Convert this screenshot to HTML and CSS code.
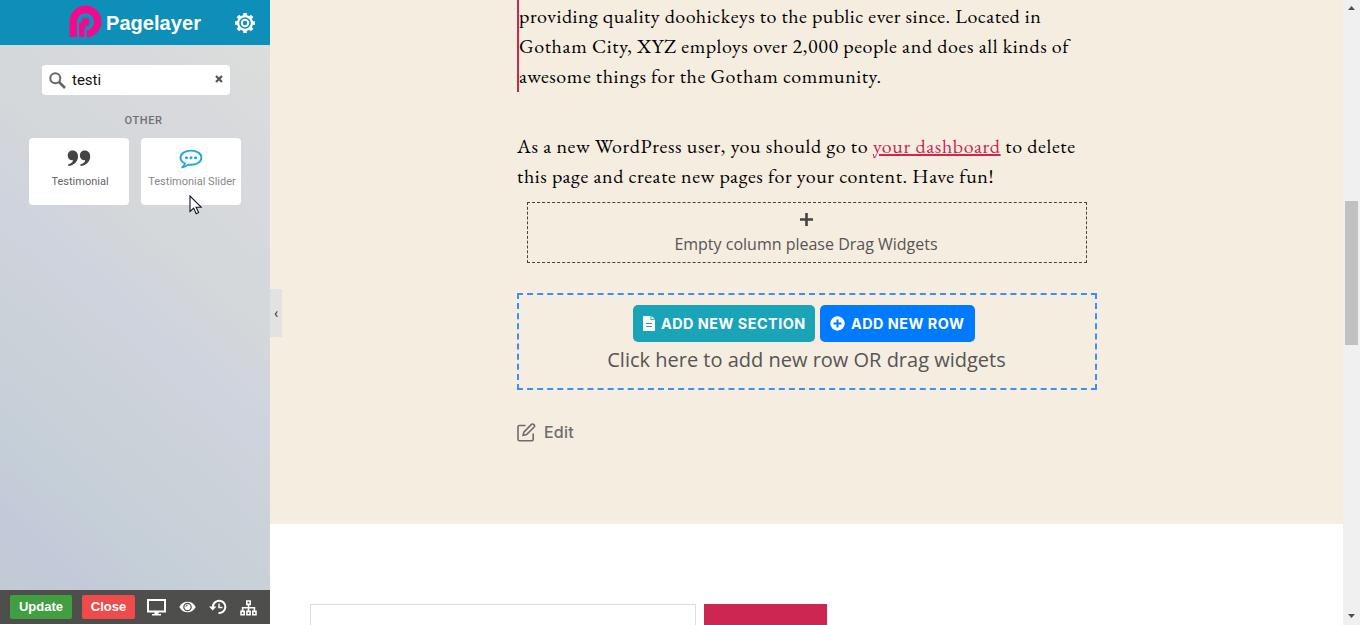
FILE: index.html
```
<!DOCTYPE html>
<html lang="en">
<head>
    <meta charset="UTF-8">
    <meta name="viewport" content="width=device-width, initial-scale=1.0">
    <title>Pagelayer</title>
    <link rel="stylesheet" href="styles.css">
</head>
<body>
    <aside class="sidebar">
        <header class="topbar">
            <svg class="logo" width="33" height="34" viewBox="0 0 33 34">
                <path d="M4.5 32V16.5A12 12 0 1 1 16.5 28.5" fill="none" stroke="#f20a8c" stroke-width="8"/>
                <path d="M13 32V17.500" fill="none" stroke="#f20a8c" stroke-width="7"/>
                <path d="M9 32V17A7.500 7.500 0 1 1 16.500 24.500V33" fill="none" stroke="#1d8dbd" stroke-width="2"/>
                <circle cx="16.500" cy="17" r="4" fill="#f20a8c"/>
            </svg>
            <span class="brand">Pagelayer</span>
            <svg class="gear" width="22" height="22" viewBox="0 0 22 22">
                <g stroke="#fff" stroke-width="3.6">
                    <path d="M11 1v20M1 11h20M3.9 3.9l14.2 14.2M18.1 3.9L3.9 18.1"/>
                </g>
                <circle cx="11" cy="11" r="8" fill="#fff"/>
                <circle cx="11" cy="11" r="5" fill="none" stroke="#0e8fb9" stroke-width="1.600"/>
                <circle cx="11" cy="11" r="2.200" fill="#0e8fb9"/>
            </svg>
        </header>
        <div class="widgets">
            <div class="search">
                <svg width="17" height="17" viewBox="0 0 17 17">
                    <circle cx="6.3" cy="6.3" r="5" fill="none" stroke="#666" stroke-width="2"/>
                    <path d="M10 10l6 6" stroke="#666" stroke-width="2.6"/>
                </svg>
                <span class="query">testi</span>
                <svg class="clear" width="8" height="8" viewBox="0 0 8 8">
                    <path d="M1 1l6 6M7 1L1 7" stroke="#555" stroke-width="2.2"/>
                </svg>
            </div>
            <div class="group">OTHER</div>
            <div class="cards">
                <div class="card">
                    <svg width="24" height="17" viewBox="0 0 24 17">
                        <g fill="#444">
                            <path d="M5.6.5C9 .5 11 3 11 6.500c0 5-4 9-9.500 9.500L1 14.500c3-.8 4.800-2.200 5-4.200-3 .4-5.300-1.700-5.300-4.800C.7 2.500 2.700.5 5.600.5z"/>
                            <path d="M17.800.5C21.200.5 23.200 3 23.200 6.500c0 5-4 9-9.500 9.500l-.5-1.500c3-.8 4.800-2.200 5-4.200-3 .4-5.300-1.700-5.300-4.800 0-3 2-5 4.900-5z"/>
                        </g>
                    </svg>
                    <span>Testimonial</span>
                </div>
                <div class="card hovered">
                    <svg width="24" height="20" viewBox="0 0 24 20">
                        <path d="M6 14.500C3 13 1.500 11 1.500 8.700 1.500 4.600 6 1.600 12 1.600s10.400 3 10.400 7.100S18 15.800 12 15.800c-1 0-1.800 0-2.700-.2C7.500 17.300 5 18.200 2.700 18.500 4.300 17.500 5.500 16 6 14.500z" fill="none" stroke="#1fa9dc" stroke-width="1.900"/>
                        <g fill="#1fa9dc">
                            <circle cx="7.500" cy="8.700" r="1.500"/>
                            <circle cx="12" cy="8.700" r="1.500"/>
                            <circle cx="16.500" cy="8.700" r="1.500"/>
                        </g>
                    </svg>
                    <span>Testimonial Slider</span>
                </div>
            </div>
        </div>
        <footer class="bottombar">
            <button class="btn update">Update</button>
            <button class="btn close">Close</button>
            <svg class="ico-screen" width="19" height="17" viewBox="0 0 19 17">
                <path d="M1 1h17v11.500H1z" fill="none" stroke="#fff" stroke-width="2"/>
                <path d="M7.500 13h4v2H14v1.500H5V15h2.500z" fill="#fff"/>
            </svg>
            <svg class="ico-eye" width="17" height="12" viewBox="0 0 17 12">
                <path d="M.3 6C2 2.600 5 .7 8.500.7S15 2.600 16.700 6C15 9.400 12 11.300 8.500 11.300S2 9.400.3 6z" fill="#fff"/>
                <circle cx="8.500" cy="6" r="3.700" fill="none" stroke="#4e4e4c" stroke-width="1.200"/>
                <path d="M6.800 5.800a1.800 1.800 0 0 1 1.800-1.600" fill="none" stroke="#4e4e4c"/>
            </svg>
            <svg class="ico-history" width="18" height="16" viewBox="0 0 18 16">
                <path d="M4 8.500A6.200 6.200 0 1 1 9.500 14" fill="none" stroke="#fff" stroke-width="2"/>
                <path d="M0 7.500h7.500L3.700 11.500z" fill="#fff"/>
                <path d="M10 4.500V8.500h3.500" fill="none" stroke="#fff" stroke-width="1.500"/>
            </svg>
            <svg class="ico-tree" width="17" height="16" viewBox="0 0 17 16">
                <g fill="none" stroke="#fff" stroke-width="1.600">
                    <path d="M6.800 1h3.400v3.400H6.800zM1 11.400h3.200v3.400H1zM6.900 11.400h3.200v3.400H6.900zM12.800 11.400H16v3.400h-3.200zM8.500 4.400v7M2.600 11V7.800h11.800V11"/>
                </g>
            </svg>
        </footer>
        <!-- mouse pointer over the hovered widget -->
        <svg class="cursor" width="13" height="20" viewBox="0 0 13 20">
            <path d="M1 1v15.500l3.700-3.400 2.500 5.600 2.400-1.100-2.500-5.400h5z" fill="#fff" stroke="#112" stroke-width="1.100"/>
        </svg>
        <div class="collapse">‹</div>
    </aside>

    <main class="page">
        <section class="content">
            <div class="column">
                <blockquote class="quote">
                    <span class="l1">providing quality doohickeys to the public ever since. Located in</span>
                    <span class="l2">Gotham City, XYZ employs over 2,000 people and does all kinds of</span>
                    <span class="l3">awesome things for the Gotham community.</span>
                </blockquote>
                <p class="text">
                    <span class="l4">As a new WordPress user, you should go to <a href="#">your dashboard</a> to delete</span>
                    <span class="l5">this page and create new pages for your content. Have fun!</span>
                </p>
                <div class="empty-col">
                    <svg width="13" height="13" viewBox="0 0 13 13">
                        <path d="M6.500 0v13M0 6.500h13" stroke="#444" stroke-width="2.600"/>
                    </svg>
                    <span>Empty column please Drag Widgets</span>
                </div>
                <div class="add-area">
                    <div class="add-buttons">
                        <button class="add section">
                            <svg width="12" height="15" viewBox="0 0 12 15">
                                <path d="M1 0h6.500v4H12v10a1 1 0 0 1-1 1H1a1 1 0 0 1-1-1V1a1 1 0 0 1 1-1zM8.500 0L12 3.200H8.500z" fill="#fff"/>
                                <path d="M3 7.500h6M3 10.500h6" stroke="#1aa4b8" stroke-width="1"/>
                            </svg>
                            <span>ADD NEW SECTION</span>
                        </button>
                        <button class="add row">
                            <svg width="15" height="15" viewBox="0 0 15 15">
                                <circle cx="7.500" cy="7.500" r="7.200" fill="#fff"/>
                                <path d="M7.500 3.500v8M3.500 7.500h8" stroke="#007bff" stroke-width="2"/>
                            </svg>
                            <span>ADD NEW ROW</span>
                        </button>
                    </div>
                    <div class="hint">Click here to add new row OR drag widgets</div>
                </div>
                <div class="edit">
                    <svg width="19" height="19" viewBox="0 0 19 19">
                        <g fill="none" stroke="#6d6d6d" stroke-width="1.600" stroke-linejoin="round" stroke-linecap="round">
                            <path d="M8 2.500H2.500A1.500 1.500 0 0 0 1 4v12.300a1.500 1.500 0 0 0 1.500 1.500h12.200a1.500 1.500 0 0 0 1.500-1.500V11"/>
                            <path d="M14.200 1.600a1.800 1.800 0 0 1 2.700 2.700L9.500 11.600 6 12.500l.9-3.400z"/>
                        </g>
                    </svg>
                    <span>Edit</span>
                </div>
            </div>
        </section>
        <section class="search-form">
            <div class="field"></div>
            <div class="submit"></div>
        </section>
    </main>

    <div class="scrollbar">
        <svg width="7" height="4" viewBox="0 0 7 4"><path d="M0 4L3.500 0 7 4z" fill="#505050"/></svg>
        <div class="thumb"></div>
        <svg class="down" width="7" height="4" viewBox="0 0 7 4"><path d="M0 0h7L3.500 4z" fill="#505050"/></svg>
    </div>
</body>
</html>
```
FILE: styles.css
```
* {
    box-sizing: border-box;
}
body {
    margin: 0;
    display: flex;
    height: 625px;
    overflow: hidden;
    background: #fff;
    font-family: Roboto, sans-serif;
}
svg {
    display: block;
    flex: none;
}
button {
    border: none;
    padding: 0;
    color: #fff;
}

/* sidebar */
.sidebar {
    position: relative;
    width: 270px;
    height: 624px;
    flex: none;
    display: flex;
    flex-direction: column;
}
.topbar {
    height: 45px;
    background: #0e8fb9;
    display: flex;
    align-items: center;
    padding-left: 69px;
}
.logo {
    margin-top: -1px;
}
.brand {
    width: 95px;
    margin-left: 4px;
    margin-top: 1px;
    font: bold 20px "Liberation Sans", Arial, sans-serif;
    letter-spacing: 0.05px;
    color: #fff;
    white-space: nowrap;
}
.gear {
    margin-left: 33px;
    margin-top: 1px;
}
.widgets {
    flex: 1;
    padding: 20px 29px 0;
    background: linear-gradient(222deg, #dcdedc 0%, #d8d9dc 16%, #d4d8da 36%, #cfd3dd 50%, #cad1d8 66%, #c5cfd8 80%, #c3c9d9 90%, #c1cbd5 100%);
}
.search {
    width: 188px;
    height: 30px;
    margin-left: 13px;
    padding: 0 7px;
    border-radius: 4px;
    background: #fff;
    display: flex;
    align-items: center;
}
.query {
    margin-left: 6px;
    font-size: 15px;
    color: #111;
}
.clear {
    margin-left: auto;
    margin-top: -2px;
}
.group {
    margin: 19px 0 10px;
    padding-left: 17px;
    line-height: 14px;
    font-size: 11px;
    font-weight: 500;
    letter-spacing: 0.6px;
    text-align: center;
    color: #707070;
}
.cards {
    display: flex;
    gap: 12px;
}
.card {
    width: 100px;
    height: 67px;
    padding-top: 12px;
    border-radius: 4px;
    background: #fff;
    display: flex;
    flex-direction: column;
    align-items: center;
    font-size: 11px;
    line-height: 14px;
    color: #666;
    white-space: nowrap;
}
.card span {
    margin-top: 8px;
    margin-left: 2px;
}
.card.hovered {
    padding-top: 11px;
}
.hovered span {
    margin-top: 6px;
    color: #888;
}
.bottombar {
    height: 34px;
    background: #4e4e4c;
    display: flex;
    align-items: center;
    padding-left: 10px;
}
.btn {
    height: 24px;
    padding-bottom: 2px;
    border-radius: 2px;
    font: bold 13px "Liberation Sans", Arial, sans-serif;
}
.update {
    width: 62px;
    background: #419e41;
}
.close {
    width: 53px;
    margin-left: 10px;
    background: #ef4b4b;
}
.ico-screen {
    margin-left: 12px;
}
.ico-eye {
    margin-left: 13px;
}
.ico-history {
    margin-left: 13px;
}
.ico-tree {
    margin-left: 13px;
    margin-top: 2px;
}
.cursor {
    position: absolute;
    left: 189px;
    top: 195px;
}
.collapse {
    position: absolute;
    left: 270px;
    top: 289px;
    width: 12px;
    height: 48px;
    line-height: 48px;
    background: #e2e2e2;
    font-size: 14px;
    text-align: center;
    color: #333;
}

/* page */
.page {
    flex: 1;
}
.content {
    height: 524px;
    background: #f5ede0;
    padding-left: 247px;
}
.column {
    width: 580px;
}
.quote,
.text {
    margin: 0;
    font-family: "EB Garamond", "Liberation Serif", serif;
    font-size: 20px;
    line-height: 30px;
    color: #000;
}
.quote {
    height: 92px;
    border-left: 2px solid #cd2653;
    padding-top: 1px;
}
.quote span,
.text span {
    display: block;
    width: max-content;
}
.l1 {
    letter-spacing: 0.52px;
}
.l2 {
    letter-spacing: 0.62px;
}
.l3 {
    letter-spacing: 0.57px;
}
.l4 {
    letter-spacing: 0.63px;
}
.l5 {
    letter-spacing: 0.6px;
}
.text {
    margin-top: 39px;
}
.text a {
    color: #cd2653;
    text-decoration-thickness: 2px;
}
.empty-col {
    width: 560px;
    height: 61px;
    margin: 11px 0 0 10px;
    padding: 10px 2px 0 0;
    border: 1px dashed #444;
    display: flex;
    flex-direction: column;
    align-items: center;
    font: 16px "Open Sans", sans-serif;
    color: #555;
}
.empty-col span {
    margin-top: 7px;
}
.add-area {
    height: 97px;
    margin-top: 30px;
    padding-top: 10px;
    border: 2px dashed #3e8ef7;
}
.add-buttons {
    display: flex;
    justify-content: center;
    gap: 5px;
    padding-right: 6px;
}
.add {
    height: 37px;
    border-radius: 5px;
    display: flex;
    align-items: center;
    font: bold 14.4px Inter, sans-serif;
    letter-spacing: 0.48px;
    white-space: nowrap;
}
.section {
    width: 182px;
    padding-left: 10px;
    gap: 6px;
    background: #1aa4b8;
}
.row {
    width: 155px;
    padding-left: 10px;
    gap: 6px;
    background: #007bff;
}
.hint {
    font: 20px/36px "Open Sans", sans-serif;
    padding-right: 1px;
    text-align: center;
    color: #555;
    white-space: nowrap;
}
.edit {
    display: flex;
    align-items: center;
    gap: 8px;
    margin-top: 32px;
    font: 500 16px/21px Inter, sans-serif;
    letter-spacing: 0.2px;
    color: #6d6d6d;
}
.search-form {
    display: flex;
    gap: 8px;
    padding: 80px 0 0 40px;
}
.field {
    width: 386px;
    height: 21px;
    border: 1px solid #dcdcdc;
    border-bottom: none;
}
.submit {
    width: 123px;
    height: 21px;
    background: #cd2653;
}

/* scrollbar */
.scrollbar {
    width: 17px;
    height: 625px;
    padding: 6px 0 7px 2px;
    background: #f0f0f0;
    display: flex;
    flex-direction: column;
}
.scrollbar svg {
    margin-left: 3px;
}
.thumb {
    width: 13px;
    height: 144px;
    margin-top: 191px;
    background: #c1c1c1;
}
.scrollbar .down {
    margin-top: auto;
}
```
